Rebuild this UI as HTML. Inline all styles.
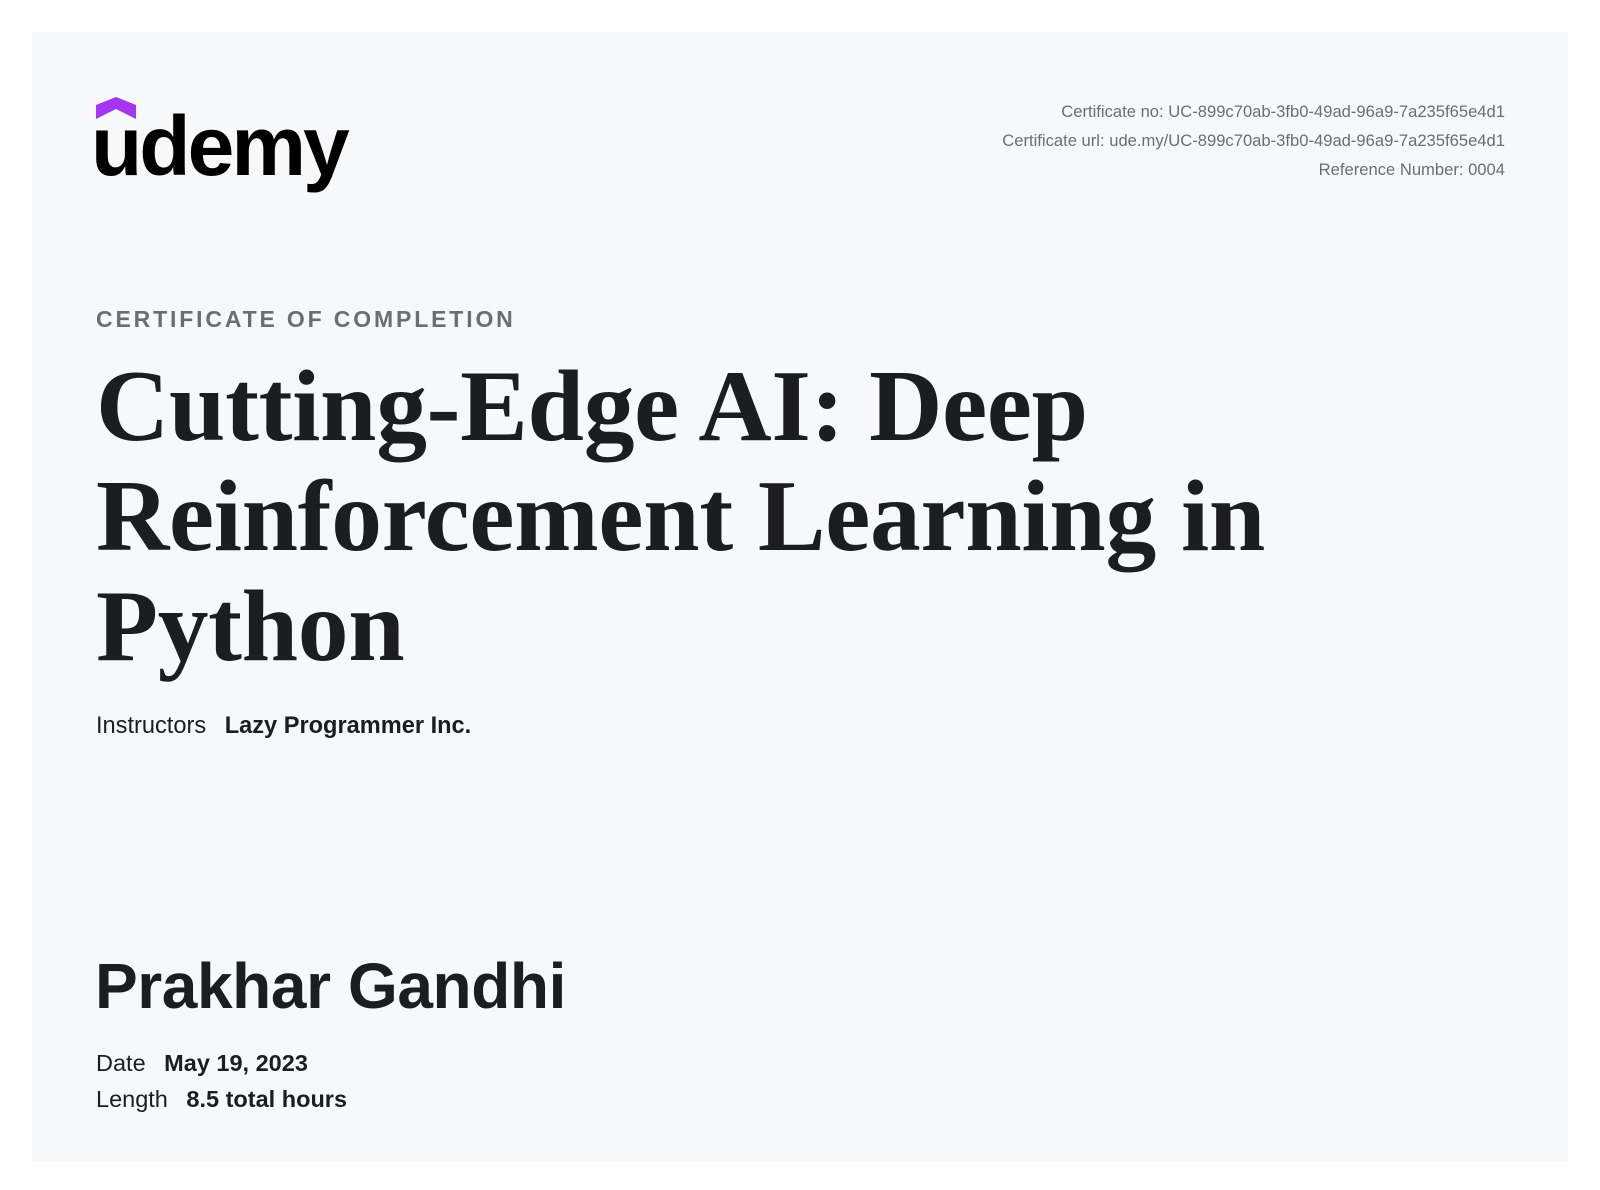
<!DOCTYPE html>
<html><head><meta charset="utf-8"><style>
html,body{margin:0;padding:0;background:#fff;width:1600px;height:1190px;overflow:hidden}
.p{position:absolute;left:32px;top:32px;width:1536px;height:1130px;background:#f7f8fa}
.a{position:absolute;white-space:nowrap;line-height:1}
.s{font-family:"Liberation Sans",sans-serif}
.r{right:95px;text-align:right;font-size:16.6px;color:#6a6f73}
</style></head><body>
<div class="p"></div>
<svg class="a" style="left:94px;top:97px" width="260" height="100" viewBox="0 0 260 100">
<polygon points="2,8 22,0 42,8 42,22 22,12 2,22" fill="#a435f0"/>
<text x="-3" y="78" font-family="Liberation Sans,sans-serif" font-weight="bold" font-size="84" letter-spacing="-3" fill="#000">udemy</text>
</svg>
<div class="a s r" style="top:104px">Certificate no: UC-899c70ab-3fb0-49ad-96a9-7a235f65e4d1</div>
<div class="a s r" style="top:133px">Certificate url: ude.my/UC-899c70ab-3fb0-49ad-96a9-7a235f65e4d1</div>
<div class="a s r" style="top:162px">Reference Number: 0004</div>
<div class="a s" style="left:96px;top:308px;font-size:23px;font-weight:bold;letter-spacing:2.85px;color:#6a6f73">CERTIFICATE OF COMPLETION</div>
<div class="a" style="left:96px;top:351px;font-family:'Liberation Serif',serif;font-weight:bold;font-size:101.5px;line-height:110px;color:#1c1d1f;white-space:normal;width:1400px;letter-spacing:-0.3px">Cutting-Edge AI: Deep<br>Reinforcement Learning in<br>Python</div>
<div class="a s" style="left:96px;top:715px;font-size:23.6px;color:#1c1d1f">Instructors <b style="margin-left:12px">Lazy Programmer Inc.</b></div>
<div class="a s" style="left:95px;top:954px;font-size:64px;font-weight:bold;color:#1c1d1f;letter-spacing:-0.4px">Prakhar Gandhi</div>
<div class="a s" style="left:96px;top:1052px;font-size:23.5px;color:#1c1d1f">Date <b style="margin-left:12px">May 19, 2023</b></div>
<div class="a s" style="left:96px;top:1088px;font-size:23.5px;color:#1c1d1f">Length <b style="margin-left:12px">8.5 total hours</b></div>
</body></html>
